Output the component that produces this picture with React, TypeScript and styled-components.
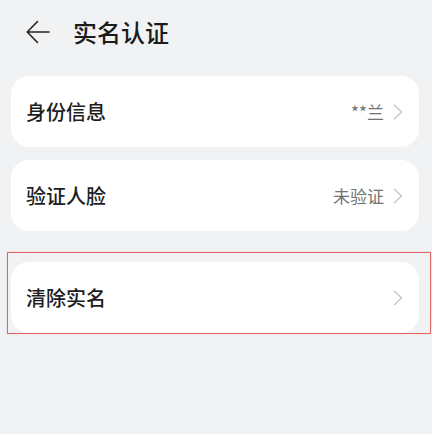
import React from "react";
import styled, { createGlobalStyle } from "styled-components";

const Global = createGlobalStyle`
  html, body { margin: 0; padding: 0; background: #f1f2f4; }
  body { font-family: "Noto Sans CJK SC", "Noto Sans", sans-serif; }
`;

const Page = styled.div`
  width: 432px;
  height: 434px;
  background: #f1f2f4;
  display: flex;
  flex-direction: column;
`;

const Header = styled.div`
  height: 64px;
  display: flex;
  align-items: center;
  padding-left: 26px;
  box-sizing: border-box;
`;

const BackIcon = styled.svg`
  width: 24px;
  height: 24px;
  flex: none;
`;

const Title = styled.h1`
  margin: 0 0 0 23px;
  font-size: 24px;
  font-weight: 500;
  color: #1b1b1b;
  line-height: 1;
`;

const List = styled.div`
  display: flex;
  flex-direction: column;
  padding: 12px 13px 0 11px;
  gap: 13px;
`;

const Highlight = styled.div`
  margin: 9px -12px 0 -4px;
  padding: 9px 11px 0 3px;
  border: 1px solid #e06a6a;
  box-shadow: 0 0 1px rgba(224, 106, 106, 0.6);
`;

const Card = styled.div`
  height: 71px;
  background: #ffffff;
  border-radius: 18px;
  display: flex;
  align-items: center;
  padding: 0 16px 0 15px;
  box-sizing: border-box;
`;

const Label = styled.div`
  flex: 1;
  font-size: 20px;
  font-weight: 500;
  color: #1e1e1e;
`;

const Value = styled.div`
  font-size: 17px;
  color: #727272;
  margin-right: 9px;
`;

const Chevron = styled.svg`
  width: 10px;
  height: 16px;
  flex: none;
`;

const Arrow = () => (
  <Chevron viewBox="0 0 10 16">
    <path d="M1.5 1.2 L8.5 8 L1.5 14.8" fill="none" stroke="#c6c6c6" strokeWidth="1.4" strokeLinecap="round" strokeLinejoin="round" />
  </Chevron>
);

export default function App() {
  return (
    <Page>
      <Global />
      <Header>
        <BackIcon viewBox="0 0 24 24">
          <path d="M23 12 H1.5 M11.5 1.5 L1.2 12 L11.5 22.5" fill="none" stroke="#222" strokeWidth="1.6" strokeLinecap="round" strokeLinejoin="round" />
        </BackIcon>
        <Title>实名认证</Title>
      </Header>
      <List>
        <Card>
          <Label>身份信息</Label>
          <Value>**兰</Value>
          <Arrow />
        </Card>
        <Card>
          <Label>验证人脸</Label>
          <Value>未验证</Value>
          <Arrow />
        </Card>
      </List>
      <List>
        <Highlight>
          <Card>
            <Label>清除实名</Label>
            <Arrow />
          </Card>
        </Highlight>
      </List>
    </Page>
  );
}
